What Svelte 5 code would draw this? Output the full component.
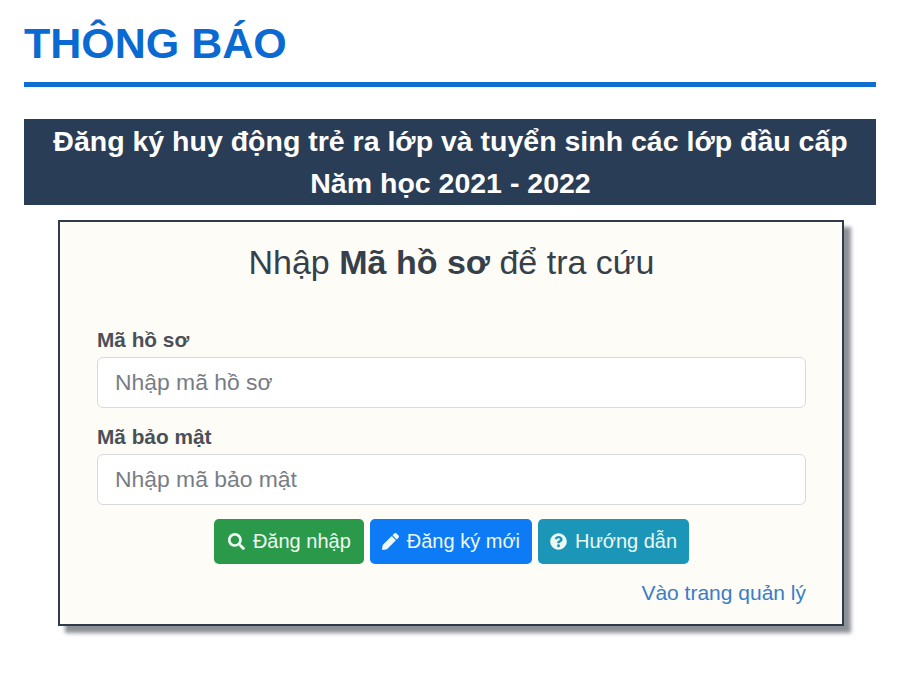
<script lang="ts">
	// Tra cứu hồ sơ tuyển sinh
	let code = $state('');
	let captcha = $state('');
</script>

<main class="page">
	<h1 class="title">THÔNG BÁO</h1>
	<div class="banner">
		<div>Đăng ký huy động trẻ ra lớp và tuyển sinh các lớp đầu cấp</div>
		<div>Năm học 2021 - 2022</div>
	</div>

	<section class="card">
		<h2 class="card-title">Nhập <b>Mã hồ sơ</b> để tra cứu</h2>

		<label class="field">
			<span>Mã hồ sơ</span>
			<input type="text" placeholder="Nhập mã hồ sơ" bind:value={code} />
		</label>
		<label class="field">
			<span>Mã bảo mật</span>
			<input type="text" placeholder="Nhập mã bảo mật" bind:value={captcha} />
		</label>

		<div class="actions">
			<button class="btn green" type="button">
				<svg viewBox="0 0 512 512" width="17" height="17"><path fill="currentColor" d="M505 442.700L405.300 343c-4.500-4.500-10.600-7-17-7H372c27.600-35.300 44-79.700 44-128C416 93.100 322.900 0 208 0S0 93.100 0 208s93.100 208 208 208c48.300 0 92.700-16.400 128-44v16.300c0 6.400 2.500 12.500 7 17l99.700 99.700c9.400 9.400 24.600 9.400 33.900 0l28.300-28.300c9.400-9.400 9.400-24.600.1-34zM208 336c-70.700 0-128-57.200-128-128 0-70.700 57.200-128 128-128 70.700 0 128 57.200 128 128 0 70.700-57.200 128-128 128z"/></svg>
				Đăng nhập
			</button>
			<button class="btn blue" type="button">
				<svg viewBox="0 0 512 512" width="17" height="17"><path fill="currentColor" d="M497.900 142.100l-46.100 46.100c-4.700 4.700-12.300 4.700-17 0l-111-111c-4.700-4.700-4.700-12.300 0-17l46.100-46.100c18.700-18.700 49.100-18.700 67.900 0l60.100 60.100c18.800 18.700 18.800 49.100 0 67.900zM284.200 99.800L21.600 362.400.4 483.900c-2.900 16.400 11.400 30.600 27.800 27.800l121.500-21.300 262.600-262.600c4.700-4.700 4.700-12.300 0-17l-111-111c-4.800-4.700-12.400-4.700-17.100 0z"/></svg>
				Đăng ký mới
			</button>
			<button class="btn teal" type="button">
				<svg viewBox="0 0 512 512" width="17" height="17"><path fill="currentColor" d="M504 256c0 137-111 248-248 248S8 393 8 256 119 8 256 8s248 111 248 248zM262.700 90c-54.500 0-89.300 23-116.500 63.800-3.500 5.300-2.400 12.400 2.700 16.300l34.700 26.300c5.200 3.900 12.600 3 16.700-2.100 17.900-22.700 30.200-35.800 57.300-35.800 20.400 0 45.700 13.100 45.700 32.900 0 14.900-12.300 22.600-32.400 33.900C247.100 238.500 216 254.900 216 296v4c0 6.600 5.400 12 12 12h56c6.600 0 12-5.400 12-12v-1.300c0-28.500 83.200-29.700 83.200-106.700 0-58-60.200-102-116.500-102zM256 338c-25.400 0-46 20.600-46 46 0 25.400 20.600 46 46 46s46-20.600 46-46c0-25.400-20.600-46-46-46z"/></svg>
				Hướng dẫn
			</button>
		</div>

		<div class="manage"><a href="#admin">Vào trang quản lý</a></div>
	</section>
</main>

<style>
	:global(body) {
		margin: 0;
		background: #fff;
		font-family: 'Liberation Sans', Arial, sans-serif;
	}

	.page {
		box-sizing: border-box;
		width: 900px;
		height: 678px;
		padding: 0 24px;
		overflow: hidden;
	}

	.title {
		margin: 0;
		padding-top: 18px;
		box-sizing: border-box;
		border-bottom: 5px solid #0e6fd0;
		height: 87px;
		color: #0a6ad2;
		font-size: 43px;
		line-height: 50px;
		font-weight: 700;
	}

	.banner {
		margin-top: 32px;
		height: 86px;
		background: #2a3d56;
		color: #fff;
		font-size: 28.5px;
		font-weight: 700;
		line-height: 41.5px;
		text-align: center;
		padding: 2px 0 0 1px;
		box-sizing: border-box;
	}

	.card {
		box-sizing: border-box;
		width: 786px;
		height: 406px;
		margin: 15px 0 0 34px;
		padding: 0 36px 0 37px;
		background: #fdfcf6;
		border: 2px solid #2f3a4a;
		box-shadow: 7px 7px 4px #8d9096;
		color: #333;
	}

	.card-title {
		margin: 0;
		padding-top: 19px;
		height: 101px;
		box-sizing: border-box;
		text-align: center;
		font-size: 34px;
		line-height: 42px;
		font-weight: 400;
		color: #36404a;
	}

	.field {
		display: block;
		margin-bottom: 12px;
	}

	.field span {
		display: block;
		font-size: 20.8px;
		font-weight: 700;
		line-height: 34px;
		color: #4a5058;
	}

	.field input {
		display: block;
		box-sizing: border-box;
		width: 100%;
		height: 51px;
		padding: 0 17px;
		border: 1px solid #d8dadc;
		border-radius: 6px;
		background: #fff;
		font: 22.9px 'Liberation Sans', Arial, sans-serif;
		color: #333;
	}

	.field input::placeholder {
		color: #787d85;
		opacity: 1;
	}

	.actions {
		display: flex;
		justify-content: center;
		gap: 6px;
		margin-top: 14px;
	}

	.btn {
		display: inline-flex;
		align-items: center;
		gap: 8px;
		height: 45px;
		padding: 0 13px 0 14px;
		border: none;
		border-radius: 5px;
		color: #eef8f2;
		font: 20px 'Liberation Sans', Arial, sans-serif;
	}

	.green { background: #2a9a4a; }
	.blue { background: #0d7bf5; padding: 0 12px; }
	.teal { background: #1c96b8; padding: 0 12px; }

	.manage {
		margin-top: 17px;
		text-align: right;
		font-size: 21px;
	}

	.manage a {
		color: #3a7cc8;
		text-decoration: none;
	}
</style>
